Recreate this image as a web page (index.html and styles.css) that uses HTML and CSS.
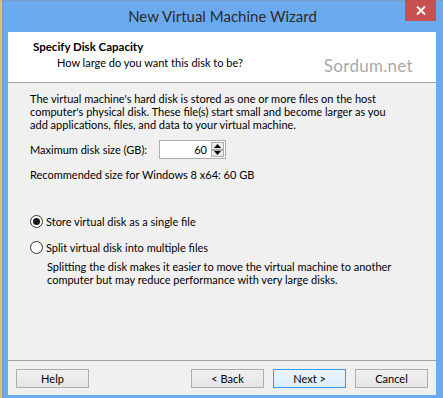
FILE: index.html
```html
<!DOCTYPE html>
<html lang="en">
<head>
  <meta charset="UTF-8">
  <title>New Virtual Machine Wizard</title>
  <link rel="stylesheet" href="styles.css">
</head>
<body>
  <div class="window">
    <div class="titlebar">
      <span class="title">New Virtual Machine Wizard</span>
      <button class="close" aria-label="Close">
        <svg width="10" height="9" viewBox="0 0 10 9"><path d="M1 0.5 L9 8.5 M9 0.5 L1 8.5" stroke="#fff" stroke-width="2"/></svg>
      </button>
    </div>
    <div class="client">
      <header class="page-head">
        <div class="head-text">
          <h1>Specify Disk Capacity</h1>
          <p class="sub">How large do you want this disk to be?</p>
        </div>
        <span class="watermark">Sordum.net</span>
      </header>
      <main class="page-body">
        <p class="intro">The virtual machine's hard disk is stored as one or more files on the host computer's physical disk. These file(s) start small and become larger as you add applications, files, and data to your virtual machine.</p>
        <div class="size-row">
          <label class="size-label" for="diskSize">Maximum disk size (GB):</label>
          <div class="spin">
            <input id="diskSize" class="spin-input" type="text" value="60">
            <div class="spin-btns">
              <span class="spin-btn"><svg width="7" height="4" viewBox="0 0 7 4"><path d="M0 4 L3.5 0 L7 4 Z" fill="#000"/></svg></span>
              <span class="spin-btn"><svg width="7" height="4" viewBox="0 0 7 4"><path d="M0 0 L3.5 4 L7 0 Z" fill="#000"/></svg></span>
            </div>
          </div>
        </div>
        <p class="recommend">Recommended size for Windows 8 x64: 60 GB</p>
        <div class="options">
          <div class="radio-row"><span class="radio checked"></span>Store virtual disk as a single file</div>
          <div class="radio-row"><span class="radio"></span>Split virtual disk into multiple files</div>
          <p class="split-note">Splitting the disk makes it easier to move the virtual machine to another computer but may reduce performance with very large disks.</p>
        </div>
      </main>
      <footer class="page-foot">
        <button class="btn">Help</button>
        <span class="spacer"></span>
        <button class="btn">&lt; Back</button>
        <button class="btn default">Next &gt;</button>
        <button class="btn">Cancel</button>
      </footer>
    </div>
  </div>
</body>
</html>
```

FILE: styles.css
```css
body {
  margin: 0;
  font-family: Lato, "Noto Sans", Arial, sans-serif;
  font-size: 11px;
  color: #000;
  background: #d8c27a;
}
.window {
  width: 441px;
  height: 398px;
  box-sizing: border-box;
  margin-left: 2px;
  padding: 0 7px 3px 5px;
  background: #6caaf0;
  border-top: 1px solid #7d99bd;
  border-left: 1px solid #7d99bd;
  display: flex;
  flex-direction: column;
}
.titlebar {
  position: relative;
  height: 31px;
  display: flex;
  align-items: center;
  justify-content: center;
  margin-left: -6px;
  margin-right: -7px;
}
.title {
  font-size: 15px;
  color: #2b2b2b;
  padding-bottom: 2px;
}
.close {
  position: absolute;
  top: -1px;
  right: 7px;
  width: 31px;
  height: 21px;
  border: none;
  padding: 0;
  background: #c75050;
  display: flex;
  align-items: center;
  justify-content: center;
}
.client {
  flex: 1;
  background: #f0f0f0;
  display: flex;
  flex-direction: column;
}
.page-head {
  height: 51px;
  box-sizing: border-box;
  background: #fff;
  border-bottom: 1px solid #a0a0a0;
  display: flex;
  align-items: flex-start;
  padding: 7px 23px 0 25px;
}
.head-text {
  flex: 1;
}
h1 {
  margin: 0;
  font-size: 11.5px;
  font-weight: 700;
  line-height: 15px;
  color: #000;
}
.sub {
  margin: 1px 0 0 24px;
  line-height: 15px;
  color: #000;
}
.watermark {
  margin-top: 16px;
  font-size: 17px;
  color: #a9a9a9;
  letter-spacing: 0.3px;
}
.page-body {
  flex: 1;
  padding: 9px 38px 0 22px;
}
.intro {
  margin: 0;
  line-height: 13px;
}
.size-row {
  display: flex;
  align-items: center;
  margin-top: 9px;
}
.size-label {
  width: 129px;
}
.spin {
  display: flex;
  width: 67px;
  height: 19px;
  box-sizing: border-box;
  border: 1px solid #abadb3;
  background: #fff;
}
.spin-input {
  width: 47px;
  border: none;
  padding: 0 3px 0 0;
  text-align: right;
  font: inherit;
  outline: none;
  background: #fff;
}
.spin-btns {
  display: flex;
  flex-direction: column;
  justify-content: space-between;
  padding: 1px;
  flex: 1;
}
.spin-btn {
  height: 7px;
  display: flex;
  align-items: center;
  justify-content: center;
  background: linear-gradient(#f2f2f2, #e4e4e4);
  border: 1px solid #acacac;
}
.recommend {
  margin: 9px 0 0;
  line-height: 13px;
}
.options {
  margin-top: 34px;
}
.radio-row {
  display: flex;
  align-items: center;
  gap: 3px;
  height: 13px;
  margin-bottom: 13px;
}
.radio {
  width: 13px;
  height: 13px;
  box-sizing: border-box;
  border: 1px solid #333;
  border-radius: 50%;
  background: #fff;
  display: flex;
  align-items: center;
  justify-content: center;
}
.radio.checked::after {
  content: "";
  width: 7px;
  height: 7px;
  border-radius: 50%;
  background: #1a1a1a;
}
.split-note {
  margin: -7px 0 0 17px;
  line-height: 13px;
}
.page-foot {
  border-top: 1px solid #a0a0a0;
  display: flex;
  gap: 9px;
  padding: 8px 8px 7px 8px;
}
.spacer {
  flex: 1;
}
.btn {
  width: 73px;
  height: 19px;
  padding: 0;
  font: inherit;
  color: #000;
  border: 1px solid #acacac;
  background: linear-gradient(#f0f0f0, #e5e5e5);
}
.btn.default {
  border-color: #3399ff;
  background: linear-gradient(#ecf4fc, #dcecfc);
}
```
